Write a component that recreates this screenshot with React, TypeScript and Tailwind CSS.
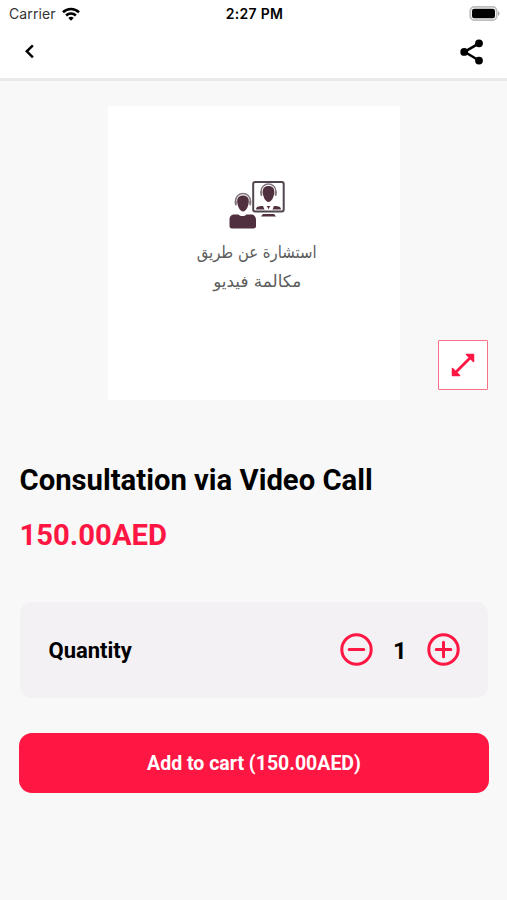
import type { ReactNode } from "react";

const PRICE = "150.00AED";

export default function App() {
  return (
    <div className="flex h-[900px] w-[507px] flex-col overflow-hidden bg-[#f8f8f8] font-['Roboto',sans-serif] text-black">
      <StatusBar />
      <Header />
      <main className="flex flex-col">
        <ProductImage />
        <section className="mt-[60px] flex flex-col px-[19.5px]">
          <h1 className="h-10 text-[29.25px] leading-[41px] font-bold whitespace-nowrap">
            Consultation via Video Call
          </h1>
          <p className="mt-[15px] h-10 text-[29.25px] leading-10 font-bold whitespace-nowrap text-[#ff1744]">
            {PRICE}
          </p>
        </section>
        <QuantityCard />
        <button className="mt-[35px] mr-[18px] ml-[19px] h-[60px] rounded-[13px] bg-[#ff1744] pt-[2px] text-[19.5px] font-bold text-white">
          Add to cart ({PRICE})
        </button>
      </main>
    </div>
  );
}

function StatusBar() {
  return (
    <div className="grid h-7 grid-cols-3 items-center bg-white pr-[7px] pb-px pl-[9px] font-['Inter',sans-serif]">
      <div className="flex items-center gap-[6px]">
        <span className="text-[14px] tracking-[0.1px] text-[#333]">Carrier</span>
        <svg width="18" height="14" viewBox="0 0 18 14" fill="none">
          <g stroke="#000" strokeWidth="2.6">
            <path d="M1 5.2a11.5 11.5 0 0 1 16 0" />
            <path d="M4.1 8.5a7 7 0 0 1 9.8 0" />
          </g>
          <path d="M9 13.8 6.3 11a3.9 3.9 0 0 1 5.4 0Z" fill="#000" />
        </svg>
      </div>
      <span className="text-center text-[14px] font-semibold tracking-[0.3px] whitespace-nowrap">2:27 PM</span>
      <svg className="justify-self-end" width="31" height="15" viewBox="0 0 31 15">
        <rect x="1.3" y=".9" width="26.4" height="13.2" rx="4" fill="#fff" stroke="#bdbdbd" strokeWidth="1.8" />
        <rect x="3" y="2.7" width="23" height="9.6" rx="2.2" />
        <path d="M29 5.2c2.1.8 2.1 3.8 0 4.6Z" fill="#aaa" />
      </svg>
    </div>
  );
}

function Header() {
  return (
    <header className="flex h-[53px] items-start justify-between border-b-3 border-[#e9e9e9] bg-white pr-[23px] pl-[24px]">
      <button aria-label="Back" className="mt-[16px]">
        <svg width="12" height="15" viewBox="0 0 12 15" fill="none">
          <path d="M8.9 1.3 2.8 7.3l6.1 6" stroke="#000" strokeWidth="2.5" />
        </svg>
      </button>
      <button aria-label="Share" className="mt-[11px]">
        <svg width="24" height="26" viewBox="0 0 24 26">
          <path d="M19 4.3 4.5 12.8 19 21.5" fill="none" stroke="#000" strokeWidth="2.5" />
          <circle cx="19" cy="4.3" r="3.9" />
          <circle cx="4.2" cy="12.9" r="3.9" />
          <circle cx="19" cy="21.6" r="3.9" />
        </svg>
      </button>
    </header>
  );
}

function ProductImage() {
  return (
    <div className="relative mt-[25px] flex justify-center">
      <div className="ml-px flex h-[294px] w-[292px] flex-col items-center bg-white">
        <ConsultationIcon />
        <p
          dir="rtl"
          lang="ar"
          className="mt-[8px] mr-[-6px] flex flex-col items-center font-['DejaVu_Sans',sans-serif] text-[16.5px] leading-[29px] whitespace-nowrap text-[#5c5c5c]"
        >
          <span className="scale-x-[0.9]">استشارة عن طريق</span>
          <span className="scale-x-[1.02]">مكالمة فيديو</span>
        </p>
      </div>
      <button
        aria-label="Expand image"
        className="absolute right-[19px] bottom-[10px] flex size-[50px] items-center justify-center rounded-[1px] border-[1.5px] border-[#fa7088] bg-white"
      >
        <svg width="24" height="24" viewBox="0 0 24 24" fill="#ff1744" stroke="#ff1744">
          <path d="M5 19 19 5" strokeWidth="2.8" />
          <path d="M15.500 1.500h7v7ZM1.500 15.500v7h7Z" strokeWidth="1.500" strokeLinejoin="round" />
        </svg>
      </button>
    </div>
  );
}

// Caller with a headset next to a monitor showing the consultant
function ConsultationIcon() {
  return (
    <svg className="mt-[74px] mr-[-6px] shrink-0" width="56" height="50" viewBox="0 0 56 50" fill="#50303f">
      <rect x="24.200" y="2" width="30.500" height="29.500" rx="2" fill="#fff" stroke="#514650" strokeWidth="2" />
      <path d="M34 34h11l2 2.500H32Z" />
      <Headset x={39.5} y={12.5} />
      <path d="M27 29.500c0-2.500 2-3.500 7-3.500l1.500 3.500ZM52 29.500c0-2.500-2-3.500-7-3.500l-1.500 3.500ZM37.500 26h4l-1.200 1.500-.8 2-.8-2Z" />
      <Headset x={14} y={22} />
      <path d="M.5 46v-6c0-4 2-5.500 5-5.500h4c2 2 6 2 8 0h4.500c3 0 5 2 5 5.500v6c0 1.500-1 2.500-2.500 2.500H3C1.500 48.500.5 47.500.5 46Z" />
    </svg>
  );
}

function Headset({ x, y }: { x: number; y: number }) {
  return (
    <g transform={`translate(${x} ${y})`}>
      <path d="M-7.500 1v-2a7.500 7.500 0 0 1 15 0v2" fill="none" stroke="#85777f" strokeWidth="1.500" />
      <path d="M-5.800-1C-5.800-5-3-6.500 0-6.500s5.800 1.500 5.800 5.500C5.800 4 3 9.500 0 9.500S-5.800 4-5.800-1Z" />
      <rect x="-8.200" y="-1.500" width="2" height="5" rx="1" fill="#85777f" />
      <rect x="6.200" y="-1.500" width="2" height="5" rx="1" fill="#85777f" />
    </g>
  );
}

function QuantityCard() {
  return (
    <div className="mt-[47px] mr-[19px] ml-5 flex h-24 items-center rounded-[12px] bg-[#f3f1f4] pr-[28px] pl-[28.5px]">
      <span className="flex-1 text-[22px] font-bold">Quantity</span>
      <div className="flex items-center">
        <RoundButton label="Decrease quantity">
          <path d="M9.200 16.500h14.600" />
        </RoundButton>
        <span className="w-[54px] pt-px text-center text-[24px] font-bold">1</span>
        <RoundButton label="Increase quantity">
          <path d="M9.200 16.500h14.600M16.500 9.200v14.600" />
        </RoundButton>
      </div>
    </div>
  );
}

function RoundButton({ label, children }: { label: string; children: ReactNode }) {
  return (
    <button aria-label={label} className="mb-px">
      <svg width="33" height="33" viewBox="0 0 33 33" fill="none" stroke="#ff1744" strokeWidth="3" strokeLinecap="round">
        <circle cx="16.500" cy="16.500" r="14.700" />
        {children}
      </svg>
    </button>
  );
}
